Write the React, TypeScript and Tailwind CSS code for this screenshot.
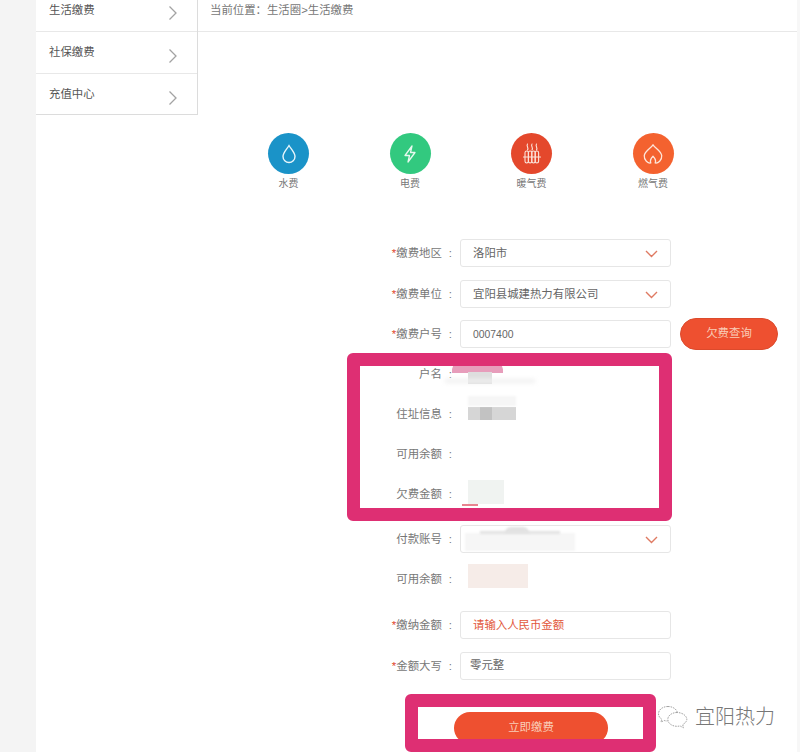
import type { ReactNode } from 'react';

const FONT = 'font-["Liberation_Sans","Noto_Sans_CJK_SC",sans-serif]';

function ArrowRight() {
  return (
    <svg width="10" height="16" viewBox="0 0 10 16" fill="none" stroke="#a3a3a3" strokeWidth="1.3">
      <polyline points="1.5,1.5 8,8 1.5,14.5" />
    </svg>
  );
}

function ArrowDown() {
  return (
    <svg width="13" height="8" viewBox="0 0 13 8" fill="none" stroke="#df7a62" strokeWidth="1.4">
      <polyline points="1,1 6.5,6.5 12,1" />
    </svg>
  );
}

function WaterIcon() {
  return (
    <svg width="22" height="22" viewBox="0 0 22 22" fill="none" stroke="#e8f6fb" strokeWidth="1.4">
      <path d="M11 2.5 C8.5 6.5 5 9.5 5 13.5 a6 6 0 0 0 12 0 C17 9.5 13.5 6.5 11 2.5 Z" />
    </svg>
  );
}

function PowerIcon() {
  return (
    <svg width="20" height="20" viewBox="0 0 20 20" fill="none" stroke="#e8f8ef" strokeWidth="1.3" strokeLinejoin="round">
      <path d="M12 2 L5 11.5 H9.5 L8 18 L15 8.5 H10.5 Z" />
    </svg>
  );
}

function HeatingIcon() {
  return (
    <svg width="24" height="24" viewBox="0 0 24 24" fill="none" stroke="#fbe3da" strokeWidth="1.1" strokeLinecap="round">
      <path d="M7.5 2 c-1.6 2 1.6 3.5 0 6 M12 2 c-1.6 2 1.6 3.5 0 6 M16.5 2 c-1.6 2 1.6 3.5 0 6" />
      <rect x="5" y="9" width="3.4" height="12" rx="1.7" />
      <rect x="8.4" y="9" width="3.4" height="12" rx="1.7" />
      <rect x="11.8" y="9" width="3.4" height="12" rx="1.7" />
      <rect x="15.2" y="9" width="3.4" height="12" rx="1.7" />
      <path d="M3.5 15 H20.5" />
    </svg>
  );
}

function GasIcon() {
  return (
    <svg width="24" height="24" viewBox="0 0 22 22" fill="none" stroke="#fde6da" strokeWidth="1.2" strokeLinejoin="round">
      <path d="M11 2.5 C9.5 5.5 3.5 8 3 12.5 C2.6 16.5 6.5 19.8 9 19.2 C7.8 16.5 9.5 14.5 11 13 C12.5 14.5 14.2 16.5 13 19.2 C15.5 19.8 19.4 16.5 19 12.5 C18.5 8 12.5 5.5 11 2.5 Z" />
    </svg>
  );
}

function WechatMark() {
  return (
    <svg width="32" height="24" viewBox="0 0 32 24" fill="none" stroke="#8a8a8a" strokeWidth="0.8" strokeDasharray="1.6 1">
      <path d="M11 1.5 C5.5 1.5 1.5 4.8 1.5 8.8 C1.5 11 2.8 13 4.8 14.3 L4 17 L7.2 15.5 C8.2 15.8 9.2 16 10.4 16" />
      <path d="M11 1.5 C15.5 1.5 19.2 3.8 20.2 7" />
      <path d="M20 7.5 C15 7.5 10.8 10.5 10.8 14.4 C10.8 18.3 15 21.3 20 21.3 C21 21.3 22 21.2 23 20.9 L26.5 22.8 L25.7 19.6 C28 18.2 29.8 16.5 29.8 14.4 C29.8 10.5 25 7.5 20 7.5 Z" />
    </svg>
  );
}

function Sidebar() {
  const items = [
    { name: '生活缴费', rowClass: 'h-[32px] pb-[9px]', arrowClass: 'mt-[4px]' },
    { name: '社保缴费', rowClass: 'h-[42px]', arrowClass: 'mt-[6px]' },
    { name: '充值中心', rowClass: 'h-[41px]', arrowClass: 'mt-[6px]' },
  ];
  return (
    <div className="w-[162px] h-[115px] shrink-0 bg-white border-r border-b border-[#dcdcdc]">
      {items.map((item, i) => (
        <div
          key={item.name}
          className={`flex items-center pl-[13px] pr-[19px] justify-between ${item.rowClass} ${i < 2 ? 'border-b border-[#e8e8e8]' : ''}`}
        >
          <span className="text-[#555]">{item.name}</span>
          <span className={item.arrowClass}>
            <ArrowRight />
          </span>
        </div>
      ))}
    </div>
  );
}

function Bills() {
  const bills = [
    { name: '水费', color: 'bg-[#1a93c8]', icon: <WaterIcon /> },
    { name: '电费', color: 'bg-[#32c97f]', icon: <PowerIcon /> },
    { name: '暖气费', color: 'bg-[#e4482c]', icon: <HeatingIcon /> },
    { name: '燃气费', color: 'bg-[#f4622f]', icon: <GasIcon /> },
  ];
  return (
    <div className="flex gap-[80.5px] pl-[70px] pt-[101px]">
      {bills.map((b) => (
        <div key={b.name} className="w-[41px] flex flex-col items-center">
          <div className={`w-[41px] h-[41px] rounded-full flex items-center justify-center ${b.color}`}>{b.icon}</div>
          <span className="mt-[2px] h-[16px] leading-[16px] text-[10px] text-[#777] whitespace-nowrap">{b.name}</span>
        </div>
      ))}
    </div>
  );
}

function Row({ label, required, children, className = '' }: { label: string; required?: boolean; children?: ReactNode; className?: string }) {
  return (
    <div className={`flex h-[28px] items-center ${className}`}>
      <div className="w-[262px] pr-[8px] pt-[1px] text-right text-[#777] whitespace-nowrap">
        {required && <span className="text-[#e0442c]">*</span>}
        {label}
        <span className="ml-[7px]">:</span>
      </div>
      {children}
    </div>
  );
}

function Field({ children, arrow }: { children: ReactNode; arrow?: boolean }) {
  return (
    <div className="w-[211px] h-[28px] px-[12px] pt-[1px] flex items-center justify-between bg-white border border-[#e6e6e6] rounded-[3px] text-[#666] whitespace-nowrap">
      <span>{children}</span>
      {arrow && <ArrowDown />}
    </div>
  );
}

function Form() {
  return (
    <div className="mt-[47px] flex flex-col">
      <Row label="缴费地区" required>
        <Field arrow>洛阳市</Field>
      </Row>
      <Row label="缴费单位" required className="mt-[13px]">
        <Field arrow>宜阳县城建热力有限公司</Field>
      </Row>
      <Row label="缴费户号" required className="mt-[12px]">
        <Field>
          <span className="text-[10.4px]">0007400</span>
        </Field>
        <button className="ml-[9px] w-[98px] h-[32px] rounded-full bg-[#ee5030] text-[#f9cdb8] border border-[#dc4a2c]">欠费查询</button>
      </Row>
      <Row label="户名" className="mt-[12px]" />
      <Row label="住址信息" className="mt-[12px]" />
      <Row label="可用余额" className="mt-[12px]" />
      <Row label="欠费金额" className="mt-[12px]" />
      <Row label="付款账号" className="mt-[17px]">
        <Field arrow>&nbsp;</Field>
      </Row>
      <Row label="可用余额" className="mt-[12px]" />
      <Row label="缴纳金额" required className="mt-[18px]">
        <Field>
          <span className="text-[#e2583c]">请输入人民币金额</span>
        </Field>
      </Row>
      <Row label="金额大写" required className="mt-[13px]">
        <div className="w-[211px] h-[28px] pl-[9px] flex items-center bg-white border border-[#e6e6e6] rounded-[3px] text-[#666]">零元整</div>
      </Row>
      <div className="mt-[32px] pl-[256px]">
        <button className="w-[154px] h-[32px] rounded-full bg-[#ee5030] text-[#f9cdb8]">立即缴费</button>
      </div>
    </div>
  );
}

// hand-smudged privacy patches from the original photo
function Smudges() {
  return (
    <>
      <div className="absolute left-[452px] top-[359px] w-[51px] h-[14px] rounded-t-[12px] bg-[#e79dbb]" />
      <div className="absolute left-[468px] top-[372px] w-[24px] h-[12px] bg-[#dedede]" />
      <div className="absolute left-[445px] top-[379px] w-[90px] h-[4px] blur-[2px] bg-[#f0f0f0]" />
      <div className="absolute left-[468px] top-[407px] w-[48px] h-[13px] bg-[#d6d6d6]" />
      <div className="absolute left-[480px] top-[407px] w-[12px] h-[13px] bg-[#c2c2c2]" />
      <div className="absolute left-[468px] top-[396px] w-[48px] h-[10px] blur-[1px] bg-[#f6f6f6]" />
      <div className="absolute left-[468px] top-[480px] w-[36px] h-[24px] bg-[#f0f3f1]" />
      <div className="absolute left-[462px] top-[504px] w-[16px] h-[2px] bg-[#e8838f]" />
      <div className="absolute left-[465px] top-[533px] w-[110px] h-[18px] bg-[#f6f6f6] blur-[1px]" />
      <div className="absolute left-[480px] top-[531px] w-[80px] h-[3px] bg-[#e2e2e2] blur-[1px]" />
      <div className="absolute left-[505px] top-[527px] w-[24px] h-[6px] rounded-t-full bg-[#e2e2e2] blur-[1px]" />
      <div className="absolute left-[468px] top-[564px] w-[60px] h-[24px] bg-[#f6ece8]" />
    </>
  );
}

export default function App() {
  return (
    <div className={`relative w-[800px] h-[752px] overflow-hidden flex bg-white text-[11.4px] ${FONT}`}>
      <div className="w-[36px] shrink-0 bg-[#f4f4f4]" />
      <Sidebar />
      <div className="flex-1">
        <div className="h-[32px] pl-[12px] pb-[9px] flex items-center border-b border-[#e8e8e8] text-[#777] whitespace-nowrap">当前位置：生活圈&gt;生活缴费</div>
        <Bills />
        <Form />
      </div>
      <div className="w-[3px] shrink-0 bg-[#f7f7f7]" />

      <Smudges />

      {/* highlight frames drawn over the screenshot */}
      <div className="absolute left-[347px] top-[353px] w-[325px] h-[168px] border-[13px] border-[#de2f73] rounded-[6px]" />
      <div className="absolute left-[405px] top-[694px] w-[251px] h-[58px] border-[13px] border-[#de2f73] rounded-[6px]" />

      <div className="absolute left-[657px] top-[705px] flex items-center gap-[6px]">
        <WechatMark />
        <span className="text-[20px] leading-[24px] font-light text-[#777] whitespace-nowrap">宜阳热力</span>
      </div>
    </div>
  );
}
